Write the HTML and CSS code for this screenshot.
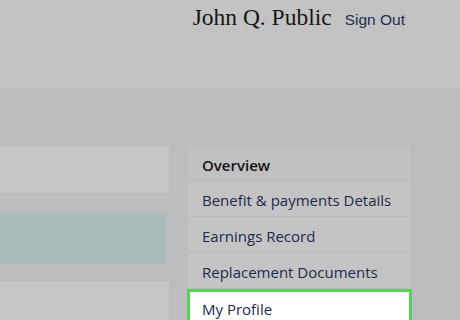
FILE: index.html
```html
<!DOCTYPE html>
<html>
<head>
<meta charset="utf-8">
<link rel="stylesheet" href="styles.css">
</head>
<body>
<header class="top">
  <div class="user">
    <span class="name">John Q. Public</span>
    <a class="signout">Sign Out</a>
  </div>
</header>
<main class="main">
  <section class="content">
    <div class="panel panel-a"></div>
    <div class="notice"></div>
    <div class="panel panel-b"></div>
  </section>
  <nav class="side">
    <div class="item item-head">Overview</div>
    <div class="item">Benefit &amp; payments Details</div>
    <div class="item">Earnings Record</div>
    <div class="item">Replacement Documents</div>
    <div class="item item-active">My Profile</div>
  </nav>
</main>
</body>
</html>
```
FILE: styles.css
```css
html, body {
  margin: 0;
  padding: 0;
  background: #bdbcbe;
  overflow: hidden;
}
.top {
  height: 89px;
  background: #c3c3c3;
  border-bottom: 1px solid #b9b9b9;
  box-sizing: border-box;
  display: flex;
  justify-content: flex-end;
  padding-right: 55px;
}
.user {
  display: flex;
  align-items: baseline;
  gap: 13px;
  padding-top: 4px;
  height: 30px;
}
.name {
  font-family: "Liberation Serif", serif;
  font-size: 23.5px;
  color: #161616;
}
.signout {
  font-family: "Liberation Sans", sans-serif;
  font-size: 15.5px;
  color: #1d2b55;
}
.main {
  display: grid;
  grid-template-columns: 170px 225px;
  column-gap: 17px;
  padding-top: 56px;
}
.content {
  display: flex;
  flex-direction: column;
}
.panel {
  background: #c5c5c5;
  border: 1px solid #bababa;
  border-left: none;
}
.panel-a {
  height: 47px;
}
.notice {
  margin-top: 19px;
  width: 166px;
  height: 52px;
  background: #aabdbc;
}
.panel-b {
  margin-top: 15px;
  height: 60px;
}
.side {
  display: flex;
  flex-direction: column;
  font-family: "Open Sans", "Noto Sans", sans-serif;
  font-size: 15px;
}
.item {
  height: 36px;
  box-sizing: border-box;
  display: flex;
  align-items: center;
  padding-left: 14px;
  padding-top: 3px;
  background: #c4c4c4;
  border: 1px solid #b8b8b8;
  border-top: none;
  color: #1c2a4f;
  white-space: nowrap;
}
.item-head {
  border-top: 1px solid #b8b8b8;
  background: #c1c1c1;
  font-weight: 600;
  color: #141414;
}
.item-active {
  background: #ffffff;
  border: 3px solid #58d158;
  padding-left: 12px;
  height: 40px;
  align-items: flex-start;
  padding-top: 7px;
}
```
